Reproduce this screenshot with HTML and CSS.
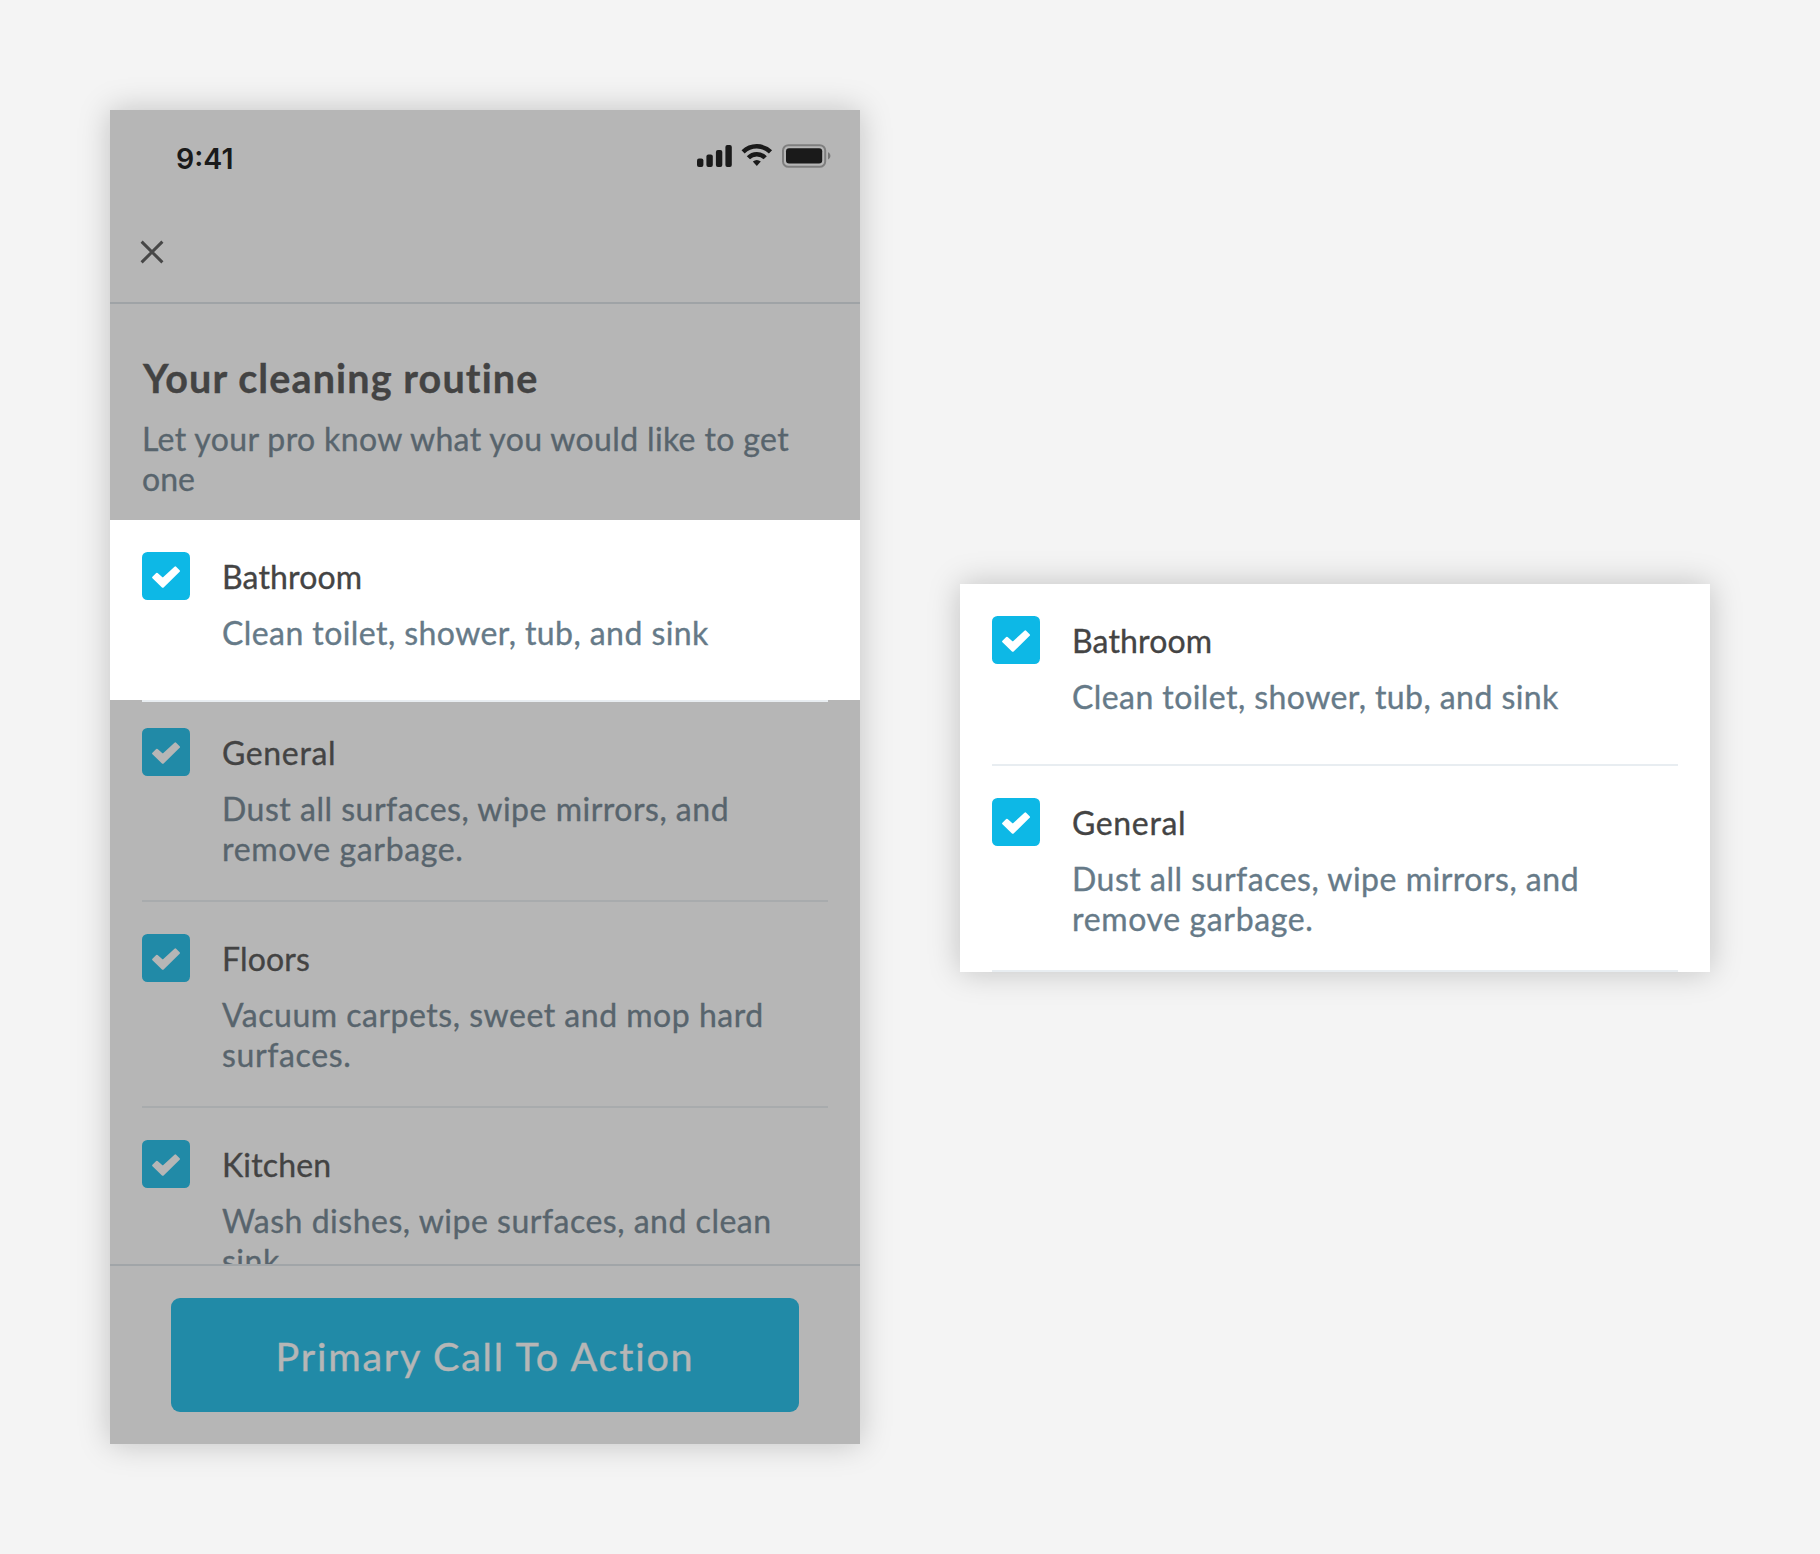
FILE: index.html
```html
<!DOCTYPE html>
<html lang="en">
<head>
<meta charset="utf-8">
<title>Your cleaning routine</title>
<link rel="stylesheet" href="styles.css">
</head>
<body>
<svg class="defs" width="0" height="0" aria-hidden="true">
  <symbol id="check" viewBox="0 0 48 48">
    <rect width="48" height="48" rx="5.5" fill="#0db8e6"/>
    <path d="M20.8 34.6L11.3 25.5L14.8 22L20.8 27.2L33.3 15.6L36.8 19Z" fill="#fff" stroke="#fff" stroke-width="2.4" stroke-linejoin="round"/>
  </symbol>
</svg>
<main class="canvas">
  <section class="phone">
    <header class="header">
      <div class="status">
        <span class="time">9:41</span>
        <svg class="indicators" width="136" height="24" viewBox="0 0 136 24">
          <rect x="1" y="14.6" width="6.4" height="8.4" rx="2"/>
          <rect x="10.4" y="10.4" width="6.4" height="12.6" rx="2"/>
          <rect x="19.9" y="6" width="6.4" height="17" rx="2"/>
          <rect x="29.4" y="1" width="6.4" height="22" rx="2"/>
          <path d="M47.1 7.9A19.7 19.7 0 0 1 74.5 7.9M52.4 13.8A11.7 11.7 0 0 1 69.2 13.8" fill="none" stroke="#000" stroke-width="4.5"/>
          <path d="M56.8 17.6A6.3 6.3 0 0 1 64.8 17.6L60.8 22Z"/>
          <rect x="87" y="1.2" width="42.2" height="21.6" rx="5.4" fill="none" stroke="#000" stroke-opacity=".35" stroke-width="2"/>
          <rect x="90" y="4.2" width="36.2" height="15.4" rx="3"/>
          <path d="M132 8.3C135.2 9.4 135.2 14.4 132 15.5Z" fill-opacity=".4"/>
        </svg>
      </div>
      <svg class="close" width="24" height="24" viewBox="0 0 24 24">
        <path d="M1.6 1.6L22.4 22.4M22.4 1.6L1.6 22.4" fill="none" stroke="#4a4a4a" stroke-width="3"/>
      </svg>
    </header>
    <div class="content">
      <div class="intro">
        <h1>Your cleaning routine</h1>
        <p>Let your pro know what you would like to get <span class="tight">one</span></p>
      </div>
      <div class="row spotlight">
        <div class="body">
          <svg class="box"><use href="#check"/></svg>
          <div class="text">
            <h2>Bathroom</h2>
            <p>Clean toilet, shower, tub, and sink</p>
          </div>
        </div>
      </div>
      <div class="row">
        <div class="body">
          <svg class="box"><use href="#check"/></svg>
          <div class="text">
            <h2 class="loose">General</h2>
            <p class="wide">Dust all surfaces, wipe mirrors, and <span class="loose">remove garbage.</span></p>
          </div>
        </div>
      </div>
      <div class="row">
        <div class="body">
          <svg class="box"><use href="#check"/></svg>
          <div class="text">
            <h2>Floors</h2>
            <p class="wide">Vacuum carpets, sweet and mop hard <span class="loose">surfaces.</span></p>
          </div>
        </div>
      </div>
      <div class="row">
        <div class="body">
          <svg class="box"><use href="#check"/></svg>
          <div class="text">
            <h2>Kitchen</h2>
            <p class="wide">Wash dishes, wipe surfaces, and clean sink</p>
          </div>
        </div>
      </div>
    </div>
    <footer class="footer">
      <button class="cta">Primary Call To Action</button>
    </footer>
  </section>

  <section class="card">
    <div class="row">
      <div class="body">
        <svg class="box"><use href="#check"/></svg>
        <div class="text">
          <h2>Bathroom</h2>
          <p>Clean toilet, shower, tub, and sink</p>
        </div>
      </div>
    </div>
    <div class="row">
      <div class="body">
        <svg class="box"><use href="#check"/></svg>
        <div class="text">
          <h2 class="loose">General</h2>
          <p class="wide">Dust all surfaces, wipe mirrors, and <span class="loose">remove garbage.</span></p>
        </div>
      </div>
    </div>
  </section>
</main>
</body>
</html>
```
FILE: styles.css
```css
* { box-sizing: border-box; }
body {
  margin: 0;
  background: #f4f4f4;
  font-family: Lato, "Open Sans", sans-serif;
  -webkit-text-stroke-width: .35px;
}
h1, h2, p { margin: 0; }
.defs { position: absolute; }

.canvas {
  display: flex;
  align-items: flex-start;
  gap: 100px;
  height: 1554px;
  padding: 110px;
}
.phone, .card {
  width: 750px;
  flex: none;
  background: #fff;
  box-shadow: 0 0 30px rgba(0, 0, 0, .21);
}
.phone {
  position: relative;
  display: flex;
  flex-direction: column;
  height: 1334px;
}
/* dims everything except the spotlight row */
.phone::after {
  content: "";
  position: absolute;
  inset: 0;
  z-index: 1;
  background: rgba(66, 66, 66, .388);
}
.card { margin-top: 474px; }

.header {
  height: 194px;
  flex: none;
  border-bottom: 2px solid #d9e1e5;
}
.status {
  display: flex;
  justify-content: space-between;
  align-items: flex-start;
  height: 130px;
  padding: 30px 28px 0 66px;
}
.time {
  padding-top: 1px;
  font: 600 28.5px/36px Inter, sans-serif;
  color: #000;
  -webkit-text-stroke-width: 0;
}
.indicators { margin-top: 4px; }
.close { display: block; margin-left: 30px; }

.content {
  flex: 1;
  min-height: 0;
  overflow: hidden;
}
.intro {
  height: 216px;
  padding: 50px 32px 0;
}
.intro h1 {
  padding-left: 1px;
  font-size: 39.5px;
  line-height: 48px;
  letter-spacing: 1.12px;
  color: #444;
}
.intro p {
  margin-top: 17px;
  font-size: 32px;
  line-height: 40px;
  letter-spacing: .36px;
  color: #667a88;
}

.row { padding: 0 32px; }
.body {
  display: flex;
  gap: 32px;
  height: 182px;
  padding: 32px 0;
  border-bottom: 2px solid #e8edf1;
}
.row + .row .body { height: 206px; }
.box {
  width: 48px;
  height: 48px;
  flex: none;
}
.text { padding-top: 5px; }
.text h2 {
  font-size: 32px;
  font-weight: 400;
  line-height: 40px;
  letter-spacing: .16px;
  color: #444;
}
.text p {
  width: 560px;
  margin-top: 16px;
  font-size: 32px;
  line-height: 40px;
  letter-spacing: .43px;
  color: #667a88;
}
.text .wide { letter-spacing: .51px; }
.text .loose { letter-spacing: .64px; }
.intro .tight { letter-spacing: 0; }

.content .spotlight {
  position: relative;
  z-index: 2;
  height: 180px;
  background: #fff;
}
.content .spotlight .body { height: 182px; }
.spotlight + .row { margin-top: -4px; }

.footer {
  height: 180px;
  flex: none;
  padding: 32px 61px;
  border-top: 2px solid #dde3e9;
}
.cta {
  display: block;
  width: 100%;
  height: 114px;
  padding: 0;
  border: 0;
  border-radius: 9px;
  background: #0db8e6;
  font: 400 39.5px/116px Lato, sans-serif;
  letter-spacing: 1.78px;
  color: #fff;
}
```
